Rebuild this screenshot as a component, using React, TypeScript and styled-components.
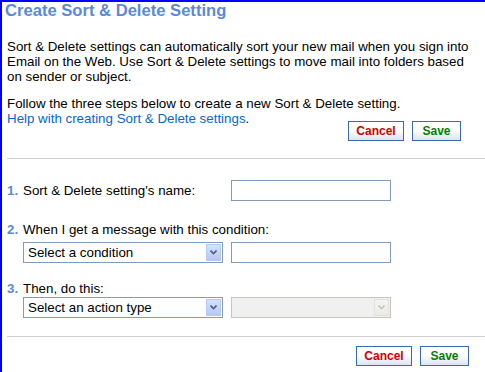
import React from "react";
import styled, { createGlobalStyle } from "styled-components";

const Global = createGlobalStyle`
  html, body { margin: 0; padding: 0; background: #fff; }
  body { font-family: "Liberation Sans", Arial, sans-serif; font-size: 13.33px; color: #000; }
  * { box-sizing: border-box; }
`;

const Frame = styled.div`
  width: 485px;
  height: 372px;
  border-top: 2px solid #0000ff;
  border-left: 2px solid #0000ff;
  overflow: hidden;
`;

const Title = styled.h1`
  margin: 0;
  padding-left: 3px;
  font-size: 16.6px;
  line-height: 17px;
  font-weight: bold;
  color: #5a8ad6;
`;

const Content = styled.div`
  padding-left: 5px;
`;

const Para = styled.p<{ $top: number }>`
  margin: ${(p) => p.$top}px 0 0 0;
  line-height: 15px;
  font-size: 13.33px;
  white-space: nowrap;
`;

const HelpLink = styled.a`
  color: #0a66c8;
  text-decoration: none;
`;

const ButtonRow = styled.div<{ $right: number; $top: number }>`
  display: flex;
  justify-content: flex-end;
  gap: 8px;
  padding-right: ${(p) => p.$right}px;
  margin-top: ${(p) => p.$top}px;
`;

const Button = styled.button<{ $tone: "red" | "green"; $w: number }>`
  width: ${(p) => p.$w}px;
  height: 20px;
  padding: 0;
  border: 1px solid #3d68b1;
  background: linear-gradient(#ffffff 0%, #ffffff 45%, #dde3f1 100%);
  font-family: "Liberation Sans", Arial, sans-serif;
  font-size: 12px;
  font-weight: bold;
  color: ${(p) => (p.$tone === "red" ? "#cc0000" : "#008000")};
  cursor: pointer;
`;

const Divider = styled.hr<{ $top: number }>`
  margin: ${(p) => p.$top}px 0 0 5px;
  border: 0;
  border-top: 1px solid #cfcfcf;
  height: 0;
`;

const Step = styled.div<{ $top: number }>`
  display: flex;
  align-items: center;
  margin-top: ${(p) => p.$top}px;
  line-height: 15px;
`;

const Num = styled.span`
  width: 16px;
  font-weight: bold;
  color: #5a8ad6;
`;

const Label = styled.span<{ $w?: number }>`
  width: ${(p) => (p.$w ? `${p.$w}px` : "auto")};
`;

const Controls = styled.div<{ $top: number }>`
  display: flex;
  gap: 8px;
  margin-top: ${(p) => p.$top}px;
  padding-left: 16px;
`;

const TextBox = styled.input`
  width: 160px;
  height: 21px;
  border: 1px solid #7f9db9;
  background: #fff;
  padding: 0 3px;
  font-family: "Liberation Sans", Arial, sans-serif;
  font-size: 13.33px;
`;

const Combo = styled.div<{ $disabled?: boolean; $w: number }>`
  position: relative;
  width: ${(p) => p.$w}px;
  height: 21px;
  border: 1px solid ${(p) => (p.$disabled ? "#c9c7ba" : "#7f9db9")};
  background: ${(p) => (p.$disabled ? "#f0f0f0" : "#fff")};
`;

const ComboSelect = styled.select`
  appearance: none;
  -webkit-appearance: none;
  width: 100%;
  height: 100%;
  border: 0;
  outline: none;
  background: transparent;
  padding: 0 20px 0 4px;
  font-family: "Liberation Sans", Arial, sans-serif;
  font-size: 13.33px;
  color: #000;
`;

const Arrow = styled.span<{ $disabled?: boolean }>`
  position: absolute;
  top: 1px;
  right: 1px;
  width: 15px;
  height: 17px;
  display: flex;
  align-items: center;
  justify-content: center;
  border: 1px solid ${(p) => (p.$disabled ? "#e2e1da" : "#b6c9f2")};
  background: ${(p) =>
    p.$disabled
      ? "linear-gradient(#f4f4f0, #ecebe6)"
      : "linear-gradient(#d3e1fb, #b4c9f5)"};
  pointer-events: none;
`;

const Chevron = ({ color }: { color: string }) => (
  <svg width="7" height="5" viewBox="0 0 7 5">
    <path d="M0.5 0.5 L3.5 3.5 L6.5 0.5" fill="none" stroke={color} strokeWidth="1.6" />
  </svg>
);

const ComboBox = ({ text, w, disabled }: { text: string; w: number; disabled?: boolean }) => (
  <Combo $w={w} $disabled={disabled}>
    <ComboSelect disabled={disabled} defaultValue={text}>
      <option value={text}>{text}</option>
    </ComboSelect>
    <Arrow $disabled={disabled}>
      <Chevron color={disabled ? "#c4c4c0" : "#4d5f80"} />
    </Arrow>
  </Combo>
);

export default function App() {
  return (
    <>
      <Global />
      <Frame>
        <Title>Create Sort &amp; Delete Setting</Title>
        <Content>
          <Para $top={20}>
            Sort &amp; Delete settings can automatically sort your new mail when you sign into
            <br />
            Email on the Web. Use Sort &amp; Delete settings to move mail into folders based
            <br />
            on sender or subject.
          </Para>
          <Para $top={12}>
            Follow the three steps below to create a new Sort &amp; Delete setting.
            <br />
            <HelpLink href="#">Help with creating Sort &amp; Delete settings</HelpLink>.
          </Para>
        </Content>
        <ButtonRow $right={24} $top={-5}>
          <Button $tone="red" $w={56}>Cancel</Button>
          <Button $tone="green" $w={49}>Save</Button>
        </ButtonRow>
        <Divider $top={17} />
        <Content>
          <Step $top={21}>
            <Num>1.</Num>
            <Label $w={208}>Sort &amp; Delete setting's name:</Label>
            <TextBox />
          </Step>
          <Step $top={21}>
            <Num>2.</Num>
            <Label>When I get a message with this condition:</Label>
          </Step>
          <Controls $top={5}>
            <ComboBox text="Select a condition" w={200} />
            <TextBox />
          </Controls>
          <Step $top={18}>
            <Num>3.</Num>
            <Label>Then, do this:</Label>
          </Step>
          <Controls $top={1}>
            <ComboBox text="Select an action type" w={200} />
            <ComboBox text="" w={160} disabled />
          </Controls>
        </Content>
        <Divider $top={18} />
        <ButtonRow $right={16} $top={9}>
          <Button $tone="red" $w={56}>Cancel</Button>
          <Button $tone="green" $w={49}>Save</Button>
        </ButtonRow>
      </Frame>
    </>
  );
}
